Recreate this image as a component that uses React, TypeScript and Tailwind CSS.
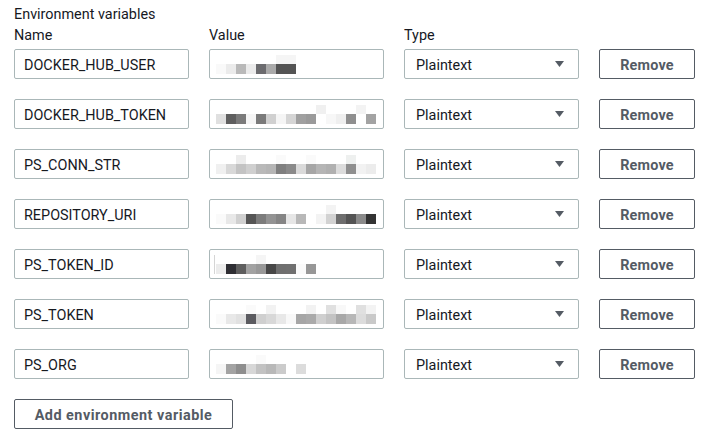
import React from "react";

type Px = string | null;

interface EnvVar {
  name: string;
  top: Px[];
  bottom: Px[];
  cursor?: boolean;
}

// blurred values, one cell = 10px
const envVars: EnvVar[] = [
  {
    name: "DOCKER_HUB_USER",
    top: [null, null, null, null, null, null, "#f5f5f5", "#f5f5f5"],
    bottom: ["#f9f9f9", "#ebebeb", "#b9b9b9", "#ebebeb", "#6b6b6e", "#aaaaaa", "#545454", "#545454"],
  },
  {
    name: "DOCKER_HUB_TOKEN",
    top: [null, null, null, null, null, null, null, null, null, null, "#f0f0f0", null, null, null, "#f3f3f3", null],
    bottom: ["#e0e0e0", "#5f5f5f", "#7b7b7b", "#f5f5f5", "#7a7a7a", "#d0d0d0", "#f5f5f5", "#d5d5d5", "#a0a0a0", "#9a9a9a", null, "#f7f7f7", "#efefef", "#8f8f8f", null, "#a3a3a3"],
  },
  {
    name: "PS_CONN_STR",
    top: [null, null, "#ececec", null, null, null, "#fafafa", null, null, "#fafafa", null, null, null, "#eef0ef", null, null],
    bottom: ["#f0f0f0", "#d8d8d8", "#c3c3c3", "#cfcfcf", "#b9b9b9", "#b5b5b5", "#7f7f7f", "#8a8a8a", "#dadada", "#a6a6a6", "#b5b5b5", "#b0b0b0", "#dcdcdc", "#8f8f8f", "#f2f2f2", "#ececec"],
  },
  {
    name: "REPOSITORY_URI",
    top: [null, null, null, null, null, null, null, null, null, null, null, "#f3f3f3", null, null, null, null],
    bottom: ["#fafafa", "#e8e8e8", "#d0d0d0", "#555555", "#7c7c7c", "#939393", "#858585", "#e6e6e6", "#b8b8b8", null, "#f3f3f3", "#d2d2d2", "#6e6e6e", "#545454", "#8a8a8a", "#333333"],
  },
  {
    name: "PS_TOKEN_ID",
    top: [null, null, null, null, "#f5f5f5", null, null, null, null, null],
    bottom: ["#ececec", "#2e2e33", "#5e5e5e", "#a2a2a2", "#989898", "#474747", "#6f6f6f", "#707070", "#fafafa", "#979797"],
    cursor: true,
  },
  {
    name: "PS_TOKEN",
    top: [null, null, null, "#fafafa", null, "#f2f2f2", null, null, null, "#f2f2f2", null, "#e0e0e0", "#f8f8f8", null, "#e0e0e0", "#f3f3f3"],
    bottom: ["#fafafa", "#e8e8e8", "#e1e1e1", "#5b5b60", "#cfcfcf", "#d8d8d8", "#e8e8e8", "#f8f8f8", "#a6a6a6", "#aaaaaa", "#cfcfcf", "#c3c3c3", "#a8a8a8", "#b7b7b7", "#dcdcdc", "#c9c9c9"],
  },
  {
    name: "PS_ORG",
    top: [null, null, null, null, "#fafafa", null, null, null, null],
    bottom: ["#f5f5f5", "#a3a3a3", "#8e8e8e", "#d7d7d7", "#c2c2c2", "#b8b8b8", "#cbcbcb", null, "#dcdcdc"],
  },
];

const BlurredValue: React.FC<{ v: EnvVar }> = ({ v }) => (
  <div className="relative w-[175px] h-[30px] border border-[#aab7b8] rounded-[2px] bg-white pl-[6px] pt-[5px]">
    {v.cursor && (
      <div className="absolute left-[4px] top-[5px] w-px h-[19px] bg-[#d5d5d5]" />
    )}
    <div className="flex h-[9px]">
      {v.top.map((c, i) => (
        <div key={i} className="w-[10px] h-[9px]" style={{ backgroundColor: c ?? "transparent" }} />
      ))}
    </div>
    <div className="flex h-[10px]">
      {v.bottom.map((c, i) => (
        <div key={i} className="w-[10px] h-[10px]" style={{ backgroundColor: c ?? "transparent" }} />
      ))}
    </div>
  </div>
);

const App: React.FC = () => {
  return (
    <div
      className="w-[714px] h-[442px] bg-white text-[#16191f] text-[14.4px] pl-[14px] pt-[5px]"
      style={{ fontFamily: "Roboto, 'Liberation Sans', sans-serif" }}
    >
      <div className="leading-[20px]">Environment variables</div>
      <div className="flex gap-[20px] leading-[20px] mb-[4px] pt-[1px]">
        <div className="w-[175px]">Name</div>
        <div className="w-[175px]">Value</div>
        <div className="w-[175px]">Type</div>
      </div>

      <div className="flex flex-col gap-[20px] -mt-[1px]">
        {envVars.map((v) => (
          <div key={v.name} className="flex gap-[20px]">
            <div className="w-[175px] h-[30px] border border-[#aab7b8] rounded-[2px] flex items-center pl-[9px] pt-[3px]">
              {v.name}
            </div>
            <BlurredValue v={v} />
            <div className="w-[175px] h-[30px] border border-[#aab7b8] rounded-[2px] flex items-center justify-between pl-[11px] pr-[14px]">
              <span className="pt-[3px]">Plaintext</span>
              <svg width="9" height="6" viewBox="0 0 9 6">
                <polygon points="0,0 9,0 4.5,6" fill="#545b64" />
              </svg>
            </div>
            <button className="w-[96px] h-[30px] border border-[#545b64] rounded-[2px] font-bold tracking-[0.2px] text-[#545b64] flex items-center justify-center pt-[3px]">
              Remove
            </button>
          </div>
        ))}
        <div>
          <button className="w-[219px] h-[30px] border border-[#545b64] rounded-[2px] font-bold tracking-[0.5px] text-[#545b64] flex items-center justify-center pt-[3px]">
            Add environment variable
          </button>
        </div>
      </div>
    </div>
  );
};

export default App;
